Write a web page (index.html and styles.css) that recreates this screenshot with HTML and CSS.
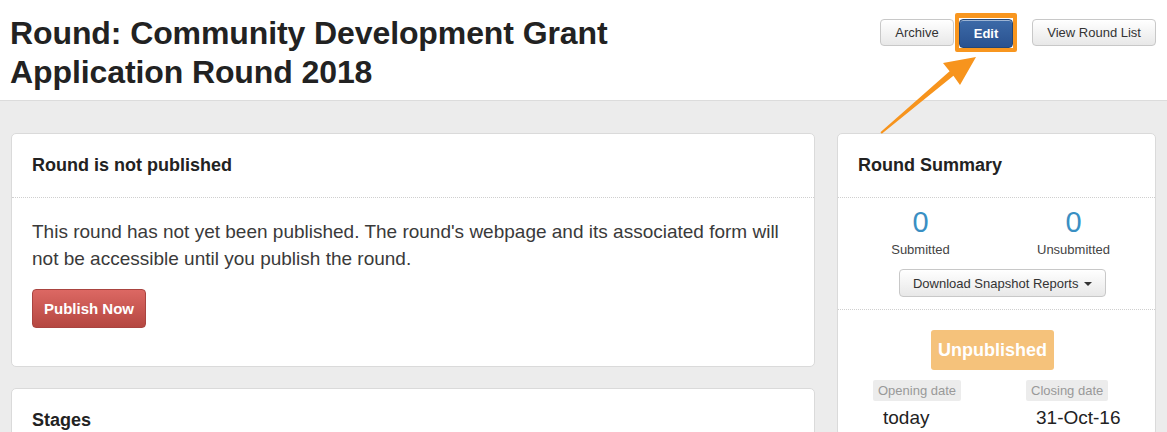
FILE: index.html
```html
<!DOCTYPE html>
<html lang="en">
<head>
<meta charset="utf-8">
<title>Round: Community Development Grant Application Round 2018</title>
<link rel="stylesheet" href="styles.css">
</head>
<body>
<header class="topbar">
  <h1 class="title">Round: Community Development Grant Application Round 2018</h1>
  <div class="actions">
    <button class="btn">Archive</button>
    <span class="highlight"><button class="btn btn-primary">Edit</button></span>
    <button class="btn btn-list">View Round List</button>
  </div>
</header>
<main class="content">
  <div class="main-col">
    <section class="card">
      <div class="card-head">Round is not published</div>
      <div class="card-body">
        <p class="notice">This round has not yet been published. The round's webpage and its associated form will not be accessible until you publish the round.</p>
        <button class="btn-danger">Publish Now</button>
      </div>
    </section>
    <section class="card">
      <div class="card-head">Stages</div>
      <div class="card-body tall"></div>
    </section>
  </div>
  <aside class="side-col">
    <section class="card">
      <div class="card-head">Round Summary</div>
      <div class="summary">
        <div class="stats">
          <div class="stat"><div class="stat-num">0</div><div class="stat-label">Submitted</div></div>
          <div class="stat"><div class="stat-num">0</div><div class="stat-label">Unsubmitted</div></div>
        </div>
        <button class="btn btn-dropdown">Download Snapshot Reports <span class="caret"></span></button>
      </div>
      <div class="status">
        <span class="badge">Unpublished</span>
        <div class="dates">
          <div class="date"><span class="date-label">Opening date</span><div class="date-value">today</div></div>
          <div class="date"><span class="date-label">Closing date</span><div class="date-value">31-Oct-16</div></div>
        </div>
      </div>
    </section>
  </aside>
</main>
<svg class="arrow" width="1167" height="432" viewBox="0 0 1167 432" aria-hidden="true">
  <polygon points="880.4,132.2 949.6,71.2 943,63 976,57 960,85 953.4,75.8 881.8,133.8" fill="#f7941d"/>
</svg>
</body>
</html>
```

FILE: styles.css
```css
html, body {
  margin: 0;
  padding: 0;
}
body {
  width: 1167px;
  height: 432px;
  overflow: hidden;
  background: #ececec;
  font-family: "Liberation Sans", Arial, Helvetica, sans-serif;
  color: #222;
  position: relative;
}
.topbar {
  background: #fff;
  border-bottom: 1px solid #dcdcdc;
  height: 101px;
  box-sizing: border-box;
  display: flex;
  justify-content: space-between;
  align-items: flex-start;
  padding: 0 11px 0 10px;
}
.title {
  margin: 14px 0 0 0;
  font-size: 32px;
  line-height: 39px;
  font-weight: bold;
  color: #222;
  max-width: 700px;
  letter-spacing: -0.1px;
}
.actions {
  display: flex;
  align-items: center;
  margin-top: 13px;
}
.btn {
  font-family: inherit;
  font-size: 13px;
  color: #333;
  height: 27px;
  padding: 0 14px;
  border: 1px solid #c8c8c8;
  border-radius: 4px;
  background: linear-gradient(#ffffff, #e8e8e8);
  box-shadow: inset 0 1px 0 rgba(255,255,255,.5);
}
.highlight {
  display: inline-flex;
  border: 4px solid #f8961f;
  border-top-width: 5px;
  border-radius: 2px;
  margin-left: 1px;
  padding: 1px 0 0 0;
}
.btn-primary {
  color: #fff;
  font-weight: bold;
  background: linear-gradient(#3c6aa8, #2a5290);
  border-color: #244777;
  height: 29px;
  padding: 0 14px;
}
.btn-list {
  margin-left: 15px;
}
.content {
  display: flex;
  gap: 22px;
  padding: 32px 11px 0 11px;
  align-items: flex-start;
}
.main-col {
  width: 804px;
  display: flex;
  flex-direction: column;
  gap: 21px;
}
.side-col {
  width: 319px;
}
.card {
  background: #fff;
  border: 1px solid #dadada;
  border-radius: 5px;
}
.card-head {
  font-size: 18px;
  font-weight: bold;
  color: #222;
  height: 63px;
  line-height: 63px;
  padding: 0 20px;
  border-bottom: 1px dotted #cfcfcf;
}
.card-body {
  padding: 20px 20px 38px 20px;
}
.card-body.tall {
  height: 100px;
}
.notice {
  margin: 0 0 17px 0;
  font-size: 19px;
  line-height: 27px;
  color: #3a3a3a;
  max-width: 752px;
}
.btn-danger {
  font-family: inherit;
  font-size: 15px;
  font-weight: bold;
  color: #fff;
  width: 114px;
  height: 39px;
  border: 1px solid #a94440;
  border-radius: 4px;
  background: linear-gradient(#dc6863, #b54741);
}
.summary {
  padding: 8px 0 12px 0;
  border-bottom: 1px dotted #cfcfcf;
  display: flex;
  flex-direction: column;
  align-items: center;
}
.stats {
  display: grid;
  grid-template-columns: 153px 153px;
  padding-left: 6px;
  align-self: stretch;
}
.stat {
  text-align: center;
}
.stat-num {
  font-size: 29px;
  line-height: 32px;
  color: #3a8fc3;
}
.stat-label {
  font-size: 13px;
  line-height: 23px;
  color: #444;
}
.btn-dropdown {
  margin-top: 8px;
  margin-left: 12px;
  width: 207px;
  height: 28px;
  padding: 0;
}
.caret {
  display: inline-block;
  width: 0;
  height: 0;
  border-left: 4px solid transparent;
  border-right: 4px solid transparent;
  border-top: 4px solid #333;
  vertical-align: middle;
  margin-left: 2px;
}
.status {
  padding: 20px 0 0 0;
  display: flex;
  flex-direction: column;
  align-items: center;
}
.badge {
  display: inline-block;
  background: #f5c27b;
  color: #fff;
  font-weight: bold;
  font-size: 18px;
  line-height: 40px;
  height: 40px;
  padding: 0 7px;
  border-radius: 3px;
  margin-right: 8px;
}
.dates {
  align-self: stretch;
  display: grid;
  grid-template-columns: 153px 153px;
  padding-left: 35px;
  margin-top: 10px;
}
.date-label {
  display: inline-block;
  background: #ececec;
  color: #999;
  font-size: 13px;
  line-height: 21px;
  padding: 0 5px;
  border-radius: 2px;
}
.date-value {
  font-size: 19px;
  line-height: 34px;
  color: #222;
  padding-left: 10px;
}
.arrow {
  position: absolute;
  left: 0;
  top: 0;
  pointer-events: none;
}
```
